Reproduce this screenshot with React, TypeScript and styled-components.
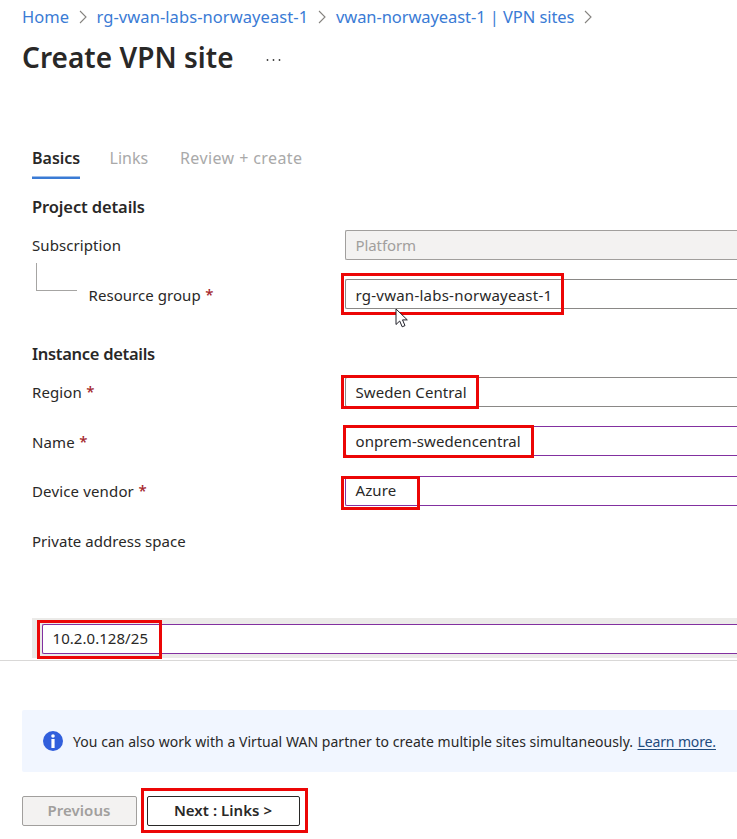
import React from "react";
import styled, { createGlobalStyle } from "styled-components";

const GlobalStyle = createGlobalStyle`
  *, *::before, *::after { box-sizing: border-box; }
  body {
    margin: 0;
    background: #fff;
    color: #292827;
    font-family: "Noto Sans", "Open Sans", sans-serif;
    font-size: 15px;
    overflow: hidden;
  }
`;

const Page = styled.main`
  display: flex;
  flex-direction: column;
  width: 737px;
  height: 839px;
  overflow: hidden;
  white-space: nowrap;
`;

const Label = styled.span<{ $spacing?: number }>`
  letter-spacing: ${(p) => p.$spacing ?? 0}px;
`;

const Breadcrumb = styled.nav`
  display: flex;
  align-items: center;
  height: 34px;
  padding-left: 22px;
  font-size: 16.5px;
  line-height: 34px;
`;

const Crumb = styled.a<{ $width: number; $spacing: number }>`
  flex: none;
  width: ${(p) => p.$width}px;
  letter-spacing: ${(p) => p.$spacing}px;
  color: #3a7bd5;
  text-decoration: none;
`;

const Chevron = styled.svg`
  flex: none;
  width: 8px;
  height: 14px;
  margin: 0 10px 0 9.5px;
  fill: none;
  stroke: #85837f;
  stroke-width: 1.1;
`;

const TitleRow = styled.header`
  display: flex;
  align-items: center;
  height: 48px;
  padding-left: 22px;
`;

const Title = styled.h1`
  width: 244px;
  margin: 0;
  font-size: 28px;
  font-weight: 600;
  line-height: 46px;
  height: 48px;
  letter-spacing: 0.03px;
`;

const MoreIcon = styled.svg`
  width: 15px;
  height: 4px;
  margin-top: 3px;
  fill: #3b3a39;
`;

const Tabs = styled.div`
  display: flex;
  height: 41px;
  margin: 56px 0 0 32px;
  font-size: 16px;
  line-height: 40px;
`;

const Tab = styled.div<{ $active?: boolean; $width: number; $gap: number; $spacing?: number }>`
  width: ${(p) => p.$width}px;
  height: 41px;
  margin-right: ${(p) => p.$gap}px;
  color: ${(p) => (p.$active ? "#292827" : "#a9a9a9")};
  background: ${(p) =>
    p.$active
      ? "linear-gradient(to bottom, transparent 38px, #9dbdea 38px, #9dbdea 39px, #3a7bd5 39px)"
      : "none"};
  font-weight: ${(p) => (p.$active ? 600 : 400)};
  letter-spacing: ${(p) => p.$spacing ?? 0}px;
`;

const SectionTitle = styled.h2<{ $top: number; $bottom: number; $spacing: number }>`
  height: 24px;
  margin: ${(p) => p.$top}px 0 ${(p) => p.$bottom}px 32px;
  font-size: 16.5px;
  font-weight: 600;
  line-height: 24px;
  letter-spacing: ${(p) => p.$spacing}px;
`;

const FormRow = styled.div<{ $gap?: number }>`
  display: grid;
  grid-template-columns: 313px 1fr;
  height: 30px;
  margin: 0 0 ${(p) => p.$gap ?? 0}px 32px;
`;

const FieldLabel = styled.label<{ $line?: number }>`
  display: flex;
  line-height: ${(p) => p.$line ?? 30}px;
`;

const Required = styled.span`
  margin: -1px 0 0 4.5px;
  color: #a4262c;
  font-weight: 500;
`;

const Branch = styled.span`
  flex: none;
  width: 41px;
  height: 28px;
  margin: -16px 11.5px 0 4px;
  border: solid #a6a5a3;
  border-width: 0 0 1px 1px;
`;

const tones = {
  disabled: { border: "#a19f9d", back: "#f3f2f1", text: "#a19f9d" },
  normal: { border: "#8a8886", back: "#fff", text: "#292827" },
  edited: { border: "#8230a0", back: "#fff", text: "#292827" },
};

const Field = styled.div<{ $tone: keyof typeof tones; $line?: number; $spacing?: number }>`
  position: relative;
  height: 30px;
  padding-left: 9.5px;
  border: 1px solid ${(p) => tones[p.$tone].border};
  border-right: 0;
  border-radius: 2px 0 0 2px;
  background: ${(p) => tones[p.$tone].back};
  color: ${(p) => tones[p.$tone].text};
  line-height: ${(p) => p.$line ?? 28}px;
  letter-spacing: ${(p) => p.$spacing ?? 0}px;
`;

const Highlight = styled.span<{ $x: number; $y: number; $w: number; $h: number }>`
  position: absolute;
  left: ${(p) => p.$x}px;
  top: ${(p) => p.$y}px;
  width: ${(p) => p.$w}px;
  height: ${(p) => p.$h}px;
  border: 3px solid #ec0606;
  pointer-events: none;
`;

const Pointer = styled.svg`
  position: absolute;
  left: 49px;
  top: 28px;
  width: 13px;
  height: 20px;
`;

const AddressRow = styled.div`
  height: 40px;
  margin: 61px 0 0 32px;
  padding: 6px 0 4px 10px;
  background: #ebeae8;
`;

const Footer = styled.footer`
  margin-top: 2px;
  padding: 49px 0 0 22px;
  border-top: 1px solid #d9d8d7;
`;

const InfoBar = styled.div`
  display: flex;
  align-items: center;
  height: 62px;
  padding-left: 21px;
  border-radius: 2px 0 0 2px;
  background: #f1f6ff;
  font-size: 14px;
`;

const InfoIcon = styled.svg`
  flex: none;
  width: 20px;
  height: 20px;
  margin-right: 10px;
`;

const InfoText = styled.span`
  flex: none;
  width: 564.5px;
  letter-spacing: 0.042px;
`;

const LearnMore = styled.a`
  color: #1f4b7d;
  letter-spacing: -0.13px;
  text-decoration: underline;
  text-underline-offset: 2px;
`;

const Actions = styled.div`
  display: flex;
  gap: 10px;
  margin-top: 24px;
`;

const Button = styled.button<{ $width: number }>`
  position: relative;
  width: ${(p) => p.$width}px;
  height: 30px;
  padding: 0 1px 2px 0;
  border: 1px solid #292827;
  border-radius: 2px;
  background: #fff;
  color: #292827;
  font: 600 15px/26px "Noto Sans", "Open Sans", sans-serif;
  letter-spacing: 0.05px;

  &:disabled {
    border-color: #a19f9d;
    background: #f3f2f1;
    color: #a19f9d;
  }
`;

const Separator = () => (
  <Chevron viewBox="0 0 8 14">
    <path d="M1 1 7 7 1 13" />
  </Chevron>
);

export default function App() {
  return (
    <>
      <GlobalStyle />
      <Page>
        <Breadcrumb>
          <Crumb $width={47} $spacing={0}>Home</Crumb>
          <Separator />
          <Crumb $width={212} $spacing={0.07}>rg-vwan-labs-norwayeast-1</Crumb>
          <Separator />
          <Crumb $width={238} $spacing={-0.08}>vwan-norwayeast-1 | VPN sites</Crumb>
          <Separator />
        </Breadcrumb>
        <TitleRow>
          <Title>Create VPN site</Title>
          <MoreIcon viewBox="0 0 15 4">
            <circle cx="1.5" cy="2" r="0.9" />
            <circle cx="7.5" cy="2" r="0.9" />
            <circle cx="13.5" cy="2" r="0.9" />
          </MoreIcon>
        </TitleRow>

        <Tabs>
          <Tab $active $width={48} $gap={29.5}>Basics</Tab>
          <Tab $width={39} $gap={31.5}>Links</Tab>
          <Tab $width={124} $gap={0} $spacing={0.4}>Review + create</Tab>
        </Tabs>

        <SectionTitle $top={16} $bottom={11} $spacing={-0.12}>Project details</SectionTitle>
        <FormRow $gap={19}>
          <FieldLabel><Label $spacing={0.08}>Subscription</Label></FieldLabel>
          <Field $tone="disabled" $spacing={-0.1}>Platform</Field>
        </FormRow>
        <FormRow>
          <FieldLabel $line={33}>
            <Branch />
            <Label $spacing={0.05}>Resource group</Label>
            <Required>*</Required>
          </FieldLabel>
          <Field $tone="normal" $line={30} $spacing={0.24}>
            rg-vwan-labs-norwayeast-1
            <Highlight $x={-5} $y={-7} $w={223} $h={42} />
            <Pointer viewBox="0 0 13 20">
              <path d="M1 1v15.5l3.7-3.5 2.5 5.8 2.8-1.2-2.5-5.7H12.3z" fill="#fff" stroke="#20202a" />
            </Pointer>
          </Field>
        </FormRow>

        <SectionTitle $top={33} $bottom={11} $spacing={-0.3}>Instance details</SectionTitle>
        <FormRow $gap={19}>
          <FieldLabel $line={31}><Label $spacing={0.1}>Region</Label><Required>*</Required></FieldLabel>
          <Field $tone="normal" $line={29} $spacing={0.07}>
            Sweden Central
            <Highlight $x={-5} $y={-3} $w={138} $h={34} />
          </Field>
        </FormRow>
        <FormRow $gap={20}>
          <FieldLabel $line={32}><Label $spacing={0.1}>Name</Label><Required>*</Required></FieldLabel>
          <Field $tone="edited" $line={29} $spacing={0.08}>
            onprem-swedencentral
            <Highlight $x={-3} $y={-2} $w={191} $h={33} />
          </Field>
        </FormRow>
        <FormRow $gap={21}>
          <FieldLabel $line={31}><Label $spacing={0.15}>Device vendor</Label><Required>*</Required></FieldLabel>
          <Field $tone="edited" $line={26} $spacing={0.1}>
            Azure
            <Highlight $x={-5} $y={-1} $w={79} $h={34} />
          </Field>
        </FormRow>
        <FormRow>
          <FieldLabel $line={28}><Label $spacing={0.04}>Private address space</Label></FieldLabel>
        </FormRow>

        <AddressRow>
          <Field $tone="edited" $line={26} $spacing={0.05}>
            10.2.0.128/25
            <Highlight $x={-6} $y={-5} $w={125} $h={39} />
          </Field>
        </AddressRow>

        <Footer>
          <InfoBar>
            <InfoIcon viewBox="0 0 20 20">
              <circle cx="10" cy="10" r="10" fill="#315fdc" />
              <circle cx="10" cy="5" r="1.8" fill="#fff" />
              <rect x="8.4" y="8" width="3.2" height="9" fill="#fff" />
            </InfoIcon>
            <InfoText>
              You can also work with a Virtual WAN partner to create multiple sites simultaneously.
            </InfoText>
            <LearnMore>Learn more.</LearnMore>
          </InfoBar>
          <Actions>
            <Button $width={115} disabled>Previous</Button>
            <Button $width={153}>
              Next : Links &gt;
              <Highlight $x={-7} $y={-9} $w={167} $h={45} />
            </Button>
          </Actions>
        </Footer>
      </Page>
    </>
  );
}
